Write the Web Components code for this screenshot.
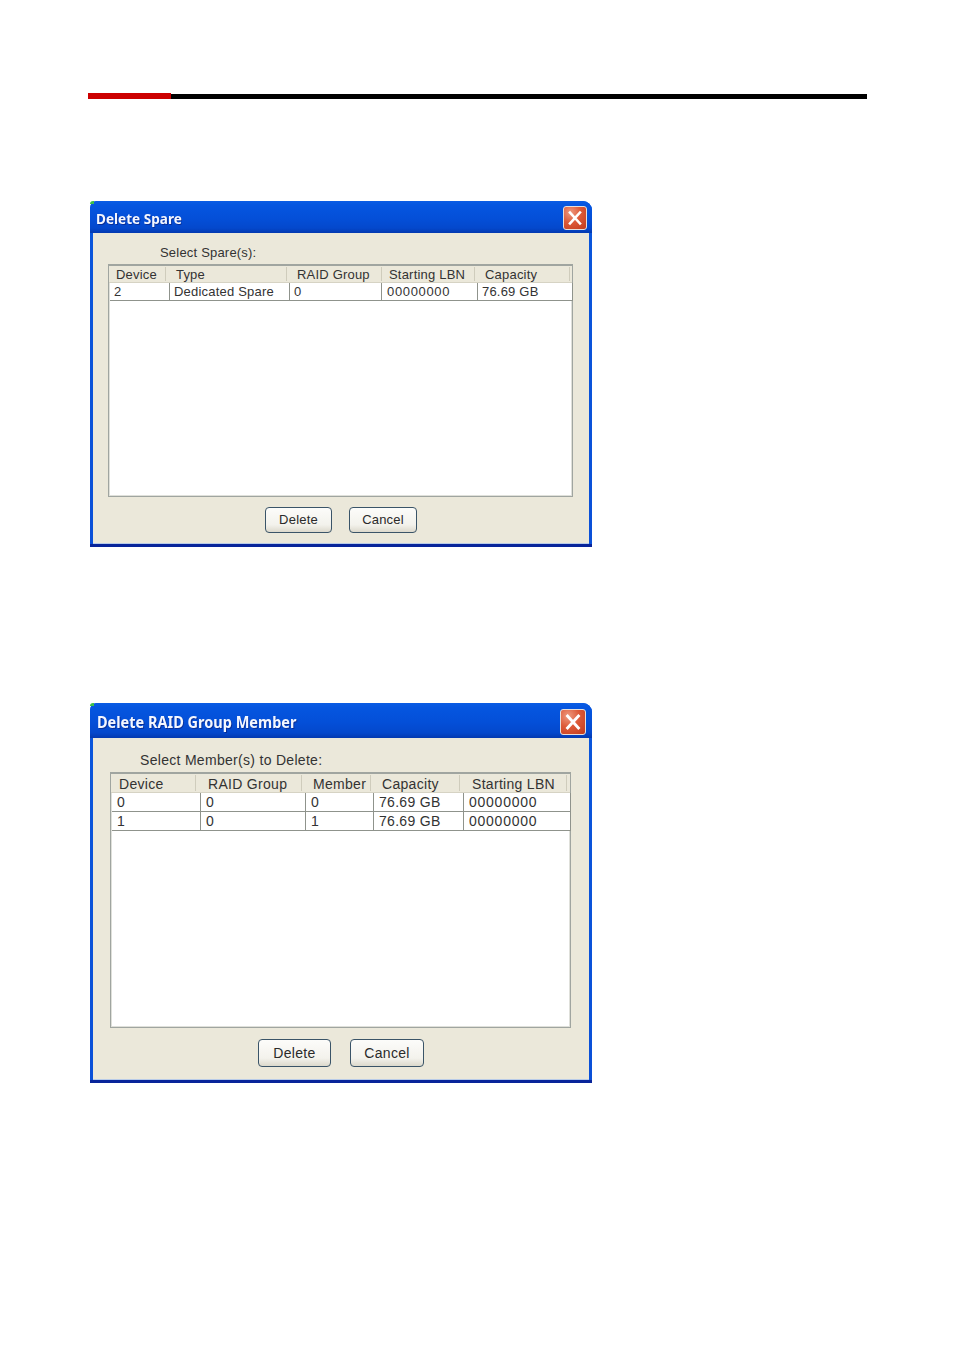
<!DOCTYPE html>
<html><head><meta charset="utf-8">
<style>
html,body{margin:0;background:#fff}
body{width:954px;height:1350px;overflow:hidden;font-family:"Liberation Sans",Arial,sans-serif;color:#222}
x-rule{margin:93px 0 0 88px}
x-dialog{margin-left:90px}
#d1{margin-top:102px}
#d2{margin-top:156px}
</style></head><body>
<x-rule></x-rule>
<x-dialog id="d1" heading="Delete Spare" label="Select Spare(s):" style="--h:346px;--tb:32px;--ts:14.6px;--tp:3px;--tx:6px;--cs:24px;--cr:5px;--fs:13px;--ls:.2px;--lp:67px;--lt:12px;--lh:16px;--tl:15px;--tr:16px;--tw:465px;--th:233px;--tt:3px;--bg:17px;--bp:10px;--bh:26px">
  <x-table slot="table" style="--rh:17px;--hh:16px;--hl:15px;--rp:4px;--nl:.65px" hcols="56,121,95,93,95" hpad="6,10,10,7,10" rcols="60,120,92,96,94" head="Device|Type|RAID Group|Starting LBN|Capacity" rows="2|Dedicated Spare|0|00000000|76.69 GB"></x-table>
  <x-btn slot="buttons" style="--w:67px">Delete</x-btn>
  <x-btn slot="buttons" style="--w:68px">Cancel</x-btn>
</x-dialog>
<x-dialog id="d2" heading="Delete RAID Group Member" label="Select Member(s) to Delete:" style="--h:380px;--tb:35px;--ts:15.6px;--tp:5px;--tx:7px;--cs:26px;--cr:6px;--fs:14px;--ls:.3px;--lp:47px;--lt:13px;--lh:18px;--tl:17px;--tr:18px;--tw:461px;--th:256px;--tt:3px;--bg:19px;--bp:11px;--bh:28px">
  <x-table slot="table" style="--rh:18px;--hh:18px;--hl:19px;--rp:5px;--nl:.75px" hcols="84,106,69,89,107" hpad="7,12,11,11,12" rcols="89,105,68,90,106" head="Device|RAID Group|Member|Capacity|Starting LBN" rows="0|0|0|76.69 GB|00000000;1|0|1|76.69 GB|00000000"></x-table>
  <x-btn slot="buttons" style="--w:73px">Delete</x-btn>
  <x-btn slot="buttons" style="--w:74px">Cancel</x-btn>
</x-dialog>
<script>
function tpl(html){const t=document.createElement('template');t.innerHTML=html;return t}
const esc=s=>s.replace(/&/g,'&amp;').replace(/</g,'&lt;');

const ruleT=tpl(`<style>
:host{display:block;width:779px;height:6px;box-sizing:border-box;padding-top:1px;position:relative}
.black{height:5px;background:#000}
.red{position:absolute;left:0;top:0;width:83px;height:6px;background:#cc0000}
</style><div class="black"></div><div class="red"></div>`);
customElements.define('x-rule',class extends HTMLElement{connectedCallback(){if(!this.shadowRoot)this.attachShadow({mode:'open'}).append(ruleT.content.cloneNode(true))}});

const closeT=tpl(`<style>
:host{display:block;flex:none;width:var(--cs);height:var(--cs);margin-top:2px;box-sizing:border-box;border:1px solid #e6dfdb;border-radius:3px;background:radial-gradient(circle at 30% 25%,#ee9a80 0,#dd5a38 45%,#c23a1c 100%)}
svg{display:block;width:100%;height:100%}
</style><svg viewBox="0 0 22 22"><path d="M6 5.5 16 16.5M16 5.5 6 16.5" stroke="#fff" stroke-width="2.6" stroke-linecap="square" fill="none"/></svg>`);
customElements.define('x-close',class extends HTMLElement{connectedCallback(){if(!this.shadowRoot)this.attachShadow({mode:'open'}).append(closeT.content.cloneNode(true))}});

const dlgT=tpl(`<style>
:host{display:block;width:502px;height:var(--h);box-sizing:border-box;position:relative;font-size:var(--fs);letter-spacing:var(--ls);color:#333}
.win{height:100%;box-sizing:border-box;display:flex;flex-direction:column;border-radius:7px 9px 0 0;overflow:hidden;background:linear-gradient(#0a56dc,#0a50d8);border-bottom:3px solid #08249a;filter:blur(.35px)}
.title{flex:none;height:var(--tb);box-sizing:border-box;display:flex;align-items:center;justify-content:space-between;padding:0 var(--cr) 0 var(--tx);background:linear-gradient(#0a5ce4 0,#0556e0 12%,#044fd8 55%,#0448cc 85%,#0339b0 100%)}
.title span{font:bold var(--ts)/1 "Noto Sans","DejaVu Sans",sans-serif;letter-spacing:0;color:#f4f7ff;text-shadow:1px 1px 0 #0a2f98;transform:scaleX(.93);transform-origin:left center;white-space:nowrap;padding-top:var(--tp)}
.body{flex:1;margin:0 3px;background:#ebe8da;border-bottom:1px solid #b8cbe8;display:flex;flex-direction:column;min-height:0}
.label{margin:var(--lt) 0 0 var(--lp);height:var(--lh);line-height:var(--lh);white-space:nowrap}
.tw{margin:var(--tt) 0 0 var(--tl);width:var(--tw);height:var(--th)}
.btns{display:flex;justify-content:center;gap:var(--bg);margin-top:var(--bp)}
.dot{position:absolute;left:0;top:0;width:4px;height:3px;background:#3fc04a;border-radius:3px 0 0 0}
</style>
<div class="win"><div class="title"><span id="h"></span><x-close></x-close></div>
<div class="body"><div class="label" id="l"></div><div class="tw"><slot name="table"></slot></div><div class="btns"><slot name="buttons"></slot></div></div></div><div class="dot"></div>`);
customElements.define('x-dialog',class extends HTMLElement{connectedCallback(){if(this.shadowRoot)return;const r=this.attachShadow({mode:'open'});r.append(dlgT.content.cloneNode(true));r.getElementById('h').textContent=this.getAttribute('heading');r.getElementById('l').textContent=this.getAttribute('label')}});

const btnT=tpl(`<style>
:host{display:block;width:var(--w);height:var(--bh);box-sizing:border-box;border:1px solid #3a5468;border-radius:4px;background:linear-gradient(#fcfcfa,#f3f2ec 70%,#dcd9cc);text-align:center;line-height:calc(var(--bh) - 2px);color:#2a2a2a}
</style><slot></slot>`);
customElements.define('x-btn',class extends HTMLElement{connectedCallback(){if(!this.shadowRoot)this.attachShadow({mode:'open'}).append(btnT.content.cloneNode(true))}});

const tblSt=`<style>
:host{display:block;height:100%;box-sizing:border-box;border:1px solid #a0a5a0;border-top-width:2px;background:#fff;padding:0 1px;box-shadow:inset 0 0 0 1px #dfe0da}
.hd{display:flex;height:var(--hh);background:#ebe8da;border-bottom:1px solid #d6d3c4;margin:0 -1px;padding:0 1px}
.hd div{box-sizing:border-box;height:calc(var(--hh) - 2px);margin-top:1px;border-right:1px solid #cfccbc;line-height:var(--hl);white-space:nowrap}
.row{display:flex;height:var(--rh);border-bottom:1px solid #8f938c;border-right:1px solid #8f938c;width:max-content;background:#fff}
.row div{box-sizing:border-box;border-right:1px solid #8f938c;padding-left:var(--rp);line-height:var(--rh);white-space:nowrap}
.row div:last-child{border-right:0}
.row div.num{padding-left:5px;letter-spacing:var(--nl)}
</style>`;
customElements.define('x-table',class extends HTMLElement{connectedCallback(){if(this.shadowRoot)return;
 const hc=this.getAttribute('hcols').split(',');const hp=this.getAttribute('hpad').split(',');const rc=this.getAttribute('rcols').split(',');
 const hd=this.getAttribute('head').split('|').map((t,i)=>`<div style="width:${hc[i]}px;padding-left:${hp[i]}px">${esc(t)}</div>`).join('');
 const rows=this.getAttribute('rows').split(';').map(r=>'<div class="row">'+r.split('|').map((t,i)=>`<div ${t.length===8&&/^\d+$/.test(t)?'class="num"':''} style="width:${rc[i]}px">${esc(t)}</div>`).join('')+'</div>').join('');
 this.attachShadow({mode:'open'}).innerHTML=tblSt+`<div class="hd">${hd}</div>${rows}`;
}});
</script>
</body></html>
